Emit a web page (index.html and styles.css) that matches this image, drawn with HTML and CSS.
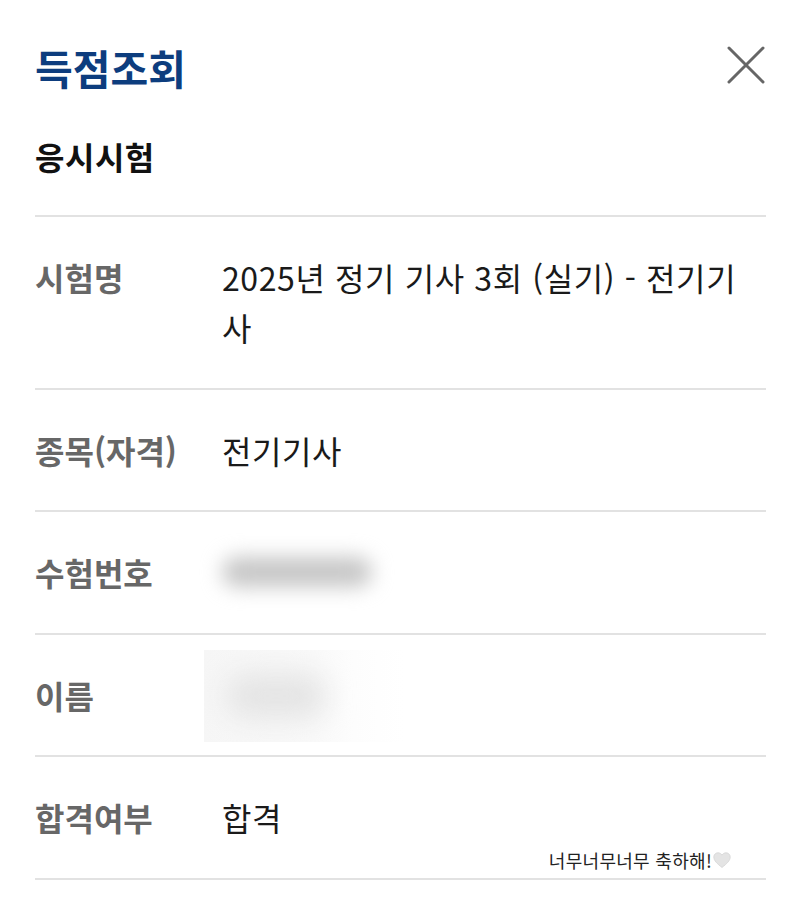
FILE: index.html
```html
<!DOCTYPE html>
<html lang="ko">
<head>
<meta charset="utf-8">
<title>득점조회</title>
<link rel="stylesheet" href="styles.css">
</head>
<body>
<div class="sheet">
  <header class="head">
    <h1 class="title">득점조회</h1>
    <button class="close" aria-label="닫기">
      <svg width="40" height="40" viewBox="0 0 40 40"><path d="M3 3 L37 37 M37 3 L3 37" stroke="#666" stroke-width="3" stroke-linecap="round" fill="none"/></svg>
    </button>
  </header>
  <h2 class="section">응시시험</h2>
  <dl class="table">
    <div class="row"><dt class="label">시험명</dt><dd class="value">2025년 정기 기사 3회 (실기) - 전기기사</dd></div>
    <div class="row"><dt class="label">종목(자격)</dt><dd class="value">전기기사</dd></div>
    <div class="row"><dt class="label">수험번호</dt><dd class="value"><span class="blur blur-num"></span></dd></div>
    <div class="row"><dt class="label">이름</dt><dd class="value"><span class="blur-box"><span class="blur blur-name"></span></span></dd></div>
    <div class="row last"><dt class="label">합격여부</dt><dd class="value">합격</dd>
      <p class="note">너무너무너무 축하해!<svg class="heart" width="18" height="16" viewBox="0 0 18 16"><path d="M9 15.5 C4 11.5 0.8 8.6 0.8 5 C0.8 2.5 2.8 0.8 5 0.8 C6.6 0.8 8.1 1.7 9 3.1 C9.9 1.7 11.4 0.8 13 0.8 C15.2 0.8 17.2 2.5 17.2 5 C17.2 8.6 14 11.5 9 15.5 Z" fill="#e4e4e4" stroke="#d4d4d4" stroke-width="0.8"/></svg></p>
    </div>
  </dl>
</div>
</body>
</html>
```
FILE: styles.css
```css
* { box-sizing: border-box; }
html, body { margin: 0; padding: 0; background: #fff; }
body {
  font-family: "Noto Sans CJK KR", "Noto Sans", sans-serif;
  color: #111;
}
.sheet {
  width: 800px;
  height: 900px;
  padding: 0 34px 0 35px;
  overflow: hidden;
}
.head {
  display: flex;
  justify-content: space-between;
  align-items: center;
  padding-top: 37px;
}
.title {
  margin: 0;
  font-size: 41px;
  line-height: 60px;
  font-weight: 700;
  color: #0d3d7e;
  letter-spacing: 0;
}
.close {
  border: 0;
  background: none;
  padding: 0;
  width: 40px;
  height: 40px;
  margin-top: -4px;
  display: flex;
}
.section {
  margin: 36px 0 0;
  font-size: 32px;
  line-height: 46px;
  font-weight: 700;
  color: #111;
  letter-spacing: 0.5px;
  padding-bottom: 36px;
  border-bottom: 2px solid #e2e2e2;
}
.table { margin: 0; }
.row {
  display: flex;
  padding: 35.25px 0;
  border-bottom: 2px solid #e2e2e2;
  position: relative;
}
.label {
  width: 187px;
  flex: none;
  font-size: 32px;
  line-height: 50px;
  font-weight: 700;
  color: #676767;
}
.value {
  margin: 0;
  flex: 1;
  padding-right: 14px;
  font-size: 32px;
  line-height: 50px;
  font-weight: 400;
  letter-spacing: 0.6px;
  color: #1a1a1a;
  min-height: 50px;
  display: flex;
  align-items: center;
  flex-wrap: wrap;
}
.blur {
  display: block;
}
.blur-num {
  width: 150px;
  height: 30px;
  background: #c6c6c6;
  border-radius: 15px;
  filter: blur(10px);
}
.blur-box {
  width: 200px;
  height: 92px;
  margin: -20px 0 -22px -18px;
  background: linear-gradient(90deg, #f6f6f6 0%, #f9f9f9 55%, #fdfdfd 75%, #fff 100%);
  overflow: hidden;
  display: flex;
  align-items: center;
}
.blur-name {
  width: 100px;
  height: 44px;
  margin-left: 22px;
  background: #e4e4e4;
  border-radius: 22px;
  filter: blur(14px);
}
.note {
  position: absolute;
  right: 35px;
  bottom: 6px;
  margin: 0;
  font-size: 18px;
  line-height: 24px;
  letter-spacing: 0.3px;
  color: #222;
  display: flex;
  align-items: center;
}
.heart { margin-left: 1px; }
```
